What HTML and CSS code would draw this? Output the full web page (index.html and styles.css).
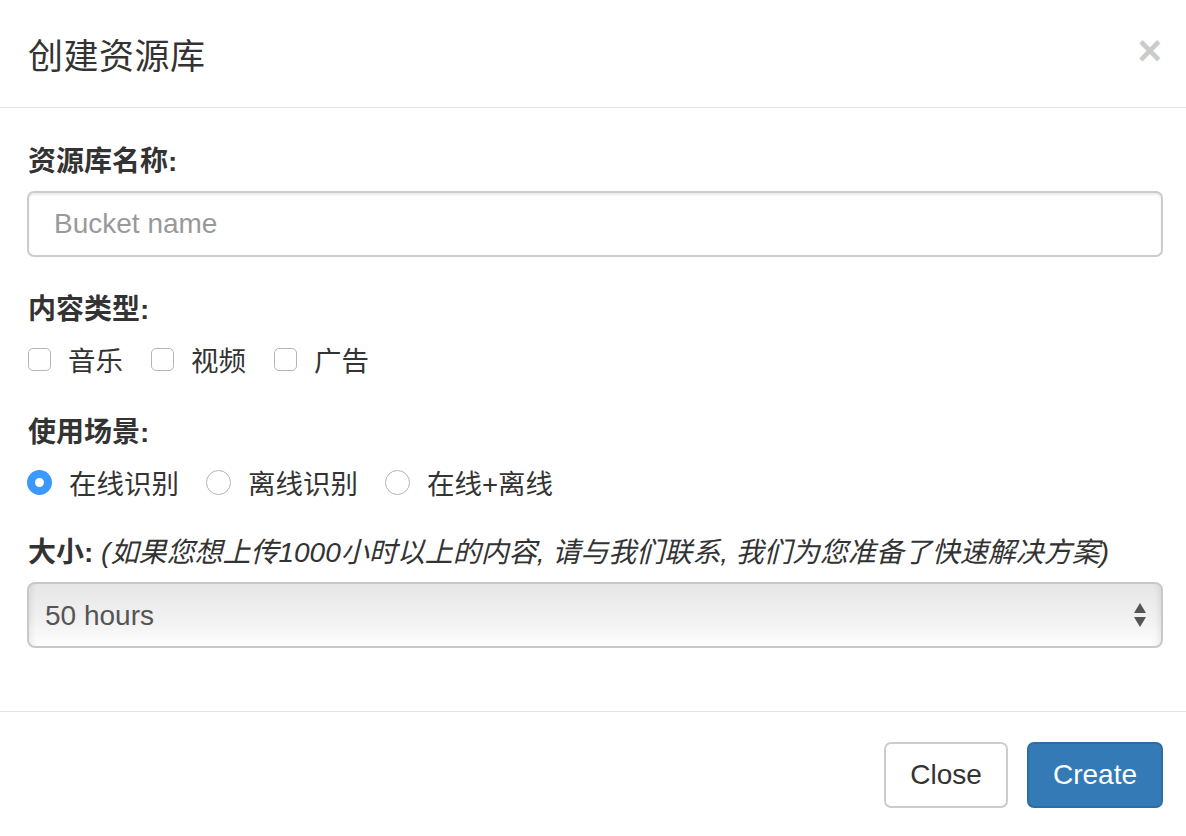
FILE: index.html
```html
<!DOCTYPE html>
<html lang="zh-CN">
<head>
    <meta charset="UTF-8">
    <meta name="viewport" content="width=device-width, initial-scale=1.0">
    <title>创建资源库</title>
    <link rel="stylesheet" href="styles.css">
</head>
<body>
    <div class="modal">
        <div class="modal-header">
            <h4 class="modal-title">创建资源库</h4>
            <button type="button" class="close">&times;</button>
        </div>
        <div class="modal-body">
            <div class="form-group">
                <label class="field-label" for="bucketName">资源库名称:</label>
                <input type="text" id="bucketName" class="form-control" placeholder="Bucket name">
            </div>
            <div class="form-group">
                <label class="field-label">内容类型:</label>
                <div class="choice-row">
                    <label class="choice"><input type="checkbox" class="check"> 音乐</label>
                    <label class="choice"><input type="checkbox" class="check"> 视频</label>
                    <label class="choice"><input type="checkbox" class="check"> 广告</label>
                </div>
            </div>
            <div class="form-group form-group-wide">
                <label class="field-label">使用场景:</label>
                <div class="choice-row">
                    <label class="choice"><input type="radio" name="scene" class="radio" checked> 在线识别</label>
                    <label class="choice"><input type="radio" name="scene" class="radio"> 离线识别</label>
                    <label class="choice"><input type="radio" name="scene" class="radio"> 在线+离线</label>
                </div>
            </div>
            <div class="form-group">
                <label class="field-label" for="size">大小: <em class="hint">(如果您想上传1000小时以上的内容, 请与我们联系, 我们为您准备了快速解决方案)</em></label>
                <div class="select-wrap">
                    <select id="size" class="form-select">
                        <option>50 hours</option>
                        <option>100 hours</option>
                        <option>500 hours</option>
                        <option>1000 hours</option>
                    </select>
                    <svg class="select-arrows" width="14" height="26" viewBox="0 0 14 26">
                        <path d="M7 1 L13 11 L1 11 Z" fill="#555"/>
                        <path d="M1 15 L13 15 L7 25 Z" fill="#555"/>
                    </svg>
                </div>
            </div>
        </div>
        <div class="modal-footer">
            <button type="button" class="btn btn-default">Close</button>
            <button type="button" class="btn btn-primary">Create</button>
        </div>
    </div>
</body>
</html>
```

FILE: styles.css
```css
body {
    margin: 0;
    padding: 0;
    background: #fff;
    color: #333;
    font-family: "Liberation Sans", "Noto Sans CJK SC", sans-serif;
}

.modal {
    width: 1186px;
    height: 836px;
    background: #fff;
}

.modal-header {
    display: flex;
    align-items: center;
    justify-content: space-between;
    height: 108px;
    padding: 0 24px 0 28px;
    border-bottom: 1px solid #e5e5e5;
    box-sizing: border-box;
}

.modal-title {
    margin: 0;
    font-size: 35px;
    font-weight: normal;
    font-family: "Noto Sans CJK SC", sans-serif;
    color: #333;
    letter-spacing: 0.5px;
}

.close {
    border: none;
    background: none;
    padding: 0;
    font-family: "Liberation Sans", sans-serif;
    font-size: 42px;
    font-weight: bold;
    line-height: 1;
    color: #000;
    opacity: 0.2;
    cursor: pointer;
    margin-top: -6px;
}

.modal-body {
    padding: 35px 23px 31px 27px;
}

.form-group {
    margin-bottom: 34px;
}

.form-group-wide {
    margin-bottom: 33px;
}

.form-group:nth-child(2) {
    margin-bottom: 36px;
}

.form-group:last-child {
    margin-bottom: 32px;
}

.field-label {
    display: block;
    font-size: 28px;
    line-height: 38px;
    font-weight: bold;
    margin-bottom: 10px;
    margin-left: 1px;
    color: #333;
}

.hint {
    font-weight: normal;
    font-style: italic;
    font-size: 28px;
    color: #333;
}

.form-control {
    display: block;
    width: 100%;
    height: 66px;
    box-sizing: border-box;
    padding: 0 25px;
    font-size: 28px;
    font-family: "Liberation Sans", sans-serif;
    color: #555;
    border: 2px solid #ccc;
    border-radius: 7px;
    box-shadow: inset 0 2px 2px rgba(0, 0, 0, 0.075);
    outline: none;
}

.form-control::placeholder {
    color: #999;
}

.choice-row {
    display: flex;
    align-items: center;
    gap: 27px;
    height: 38px;
    margin-top: 11px;
}

.choice {
    display: flex;
    align-items: center;
    gap: 17px;
    font-size: 27.5px;
    color: #333;
}

.check {
    appearance: none;
    width: 23px;
    height: 23px;
    margin: 0 0 0 1px;
    border: 1.5px solid #b5b5b5;
    border-radius: 5px;
    background: #fff;
    box-sizing: border-box;
}

.radio {
    appearance: none;
    width: 25px;
    height: 25px;
    margin: 0;
    border: 1.5px solid #b5b5b5;
    border-radius: 50%;
    background: #fff;
    box-sizing: border-box;
}

.radio:checked {
    border: 8px solid #3b99fc;
    background: #fff;
}

.select-wrap {
    position: relative;
}

.form-select {
    appearance: none;
    display: block;
    width: 100%;
    height: 66px;
    box-sizing: border-box;
    padding: 0 16px;
    font-size: 28px;
    font-family: "Liberation Sans", sans-serif;
    color: #555;
    border: 2px solid #c8c8c8;
    border-radius: 8px;
    background: linear-gradient(to bottom, #e6e6e6, #f2f2f2 60%, #fdfdfd);
    box-shadow: inset 8px 0 6px -6px rgba(0, 0, 0, 0.08), inset -8px 0 6px -6px rgba(0, 0, 0, 0.08);
    outline: none;
}

.select-arrows {
    position: absolute;
    right: 16px;
    top: 20px;
    pointer-events: none;
}

.modal-footer {
    display: flex;
    justify-content: flex-end;
    gap: 19px;
    padding: 30px 23px 0 0;
    border-top: 1px solid #e5e5e5;
}

.btn {
    height: 66px;
    padding: 0 24px;
    font-size: 28px;
    font-family: "Liberation Sans", sans-serif;
    border-radius: 7px;
    border: 2px solid transparent;
    cursor: pointer;
}

.btn-default {
    background: #fff;
    color: #333;
    border-color: #ccc;
}

.btn-primary {
    background: #337ab7;
    color: #fff;
    border-color: #2e6da4;
}
```
